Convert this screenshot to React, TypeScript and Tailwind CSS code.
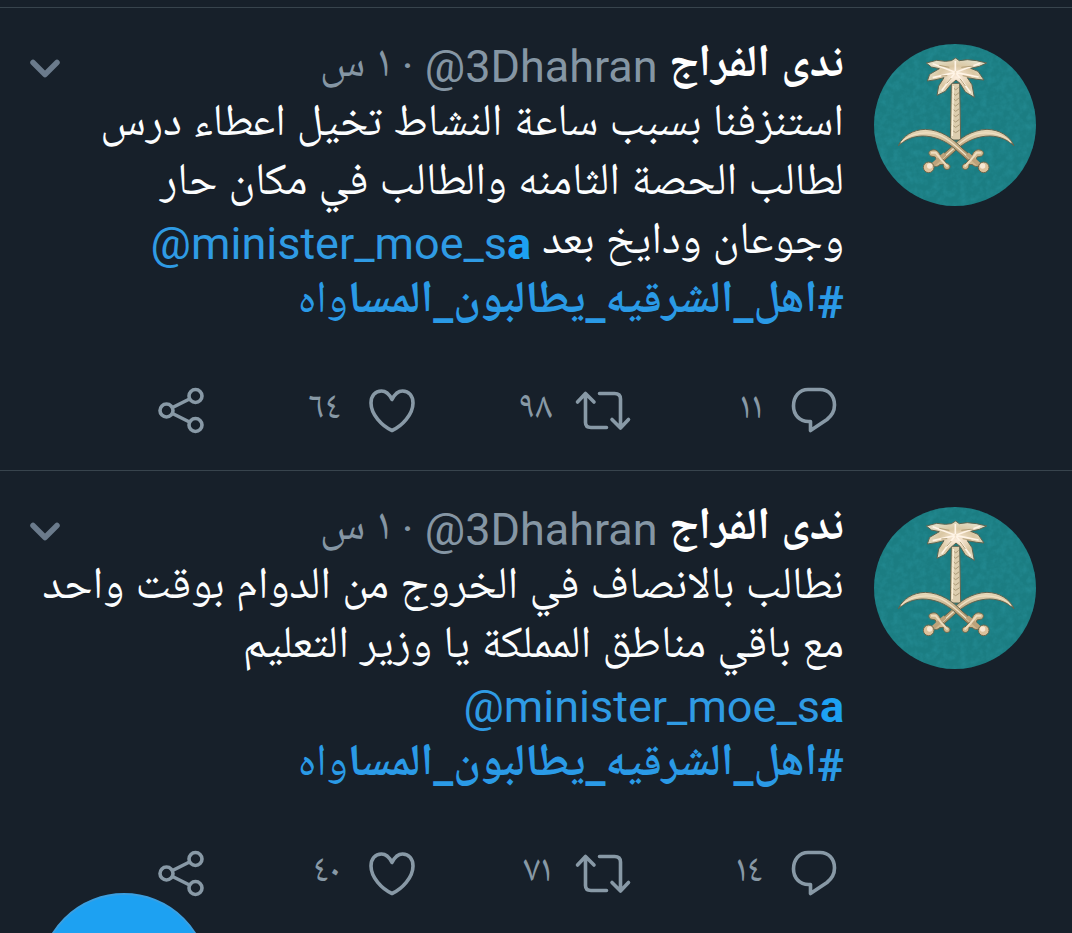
import type { ReactNode } from "react";

type Tweet = {
  id: number;
  lines: ReactNode[];
  replies: string;
  retweets: string;
  likes: string;
};

function Mention() {
  return (
    <a href="#mention" dir="ltr" className="text-[#2f9be4]">
      @minister_moe_s<b className="text-[#1da1f2]">a</b>
    </a>
  );
}

function Hashtag() {
  return (
    <a href="#hashtag" className="text-[#2a9ae6]">
      <b>#اهل_الشرقيه_يطالبون_المسا</b>واه
    </a>
  );
}

const tweets: Tweet[] = [
  {
    id: 1,
    lines: [
      "استنزفنا بسبب ساعة النشاط تخيل اعطاء درس",
      "لطالب الحصة الثامنه والطالب في مكان حار",
      <>
        وجوعان ودايخ بعد <Mention />
      </>,
      <Hashtag />,
    ],
    replies: "١١",
    retweets: "٩٨",
    likes: "٦٤",
  },
  {
    id: 2,
    lines: [
      "نطالب بالانصاف في الخروج من الدوام بوقت واحد",
      "مع باقي مناطق المملكة يا وزير التعليم",
      <Mention />,
      <Hashtag />,
    ],
    replies: "١٤",
    retweets: "٧١",
    likes: "٤٠",
  },
];

function Sword() {
  return (
    <g>
      <path
        d="M115 347C128 318 158 299 196 298C243 300 278 325 306 354L354 395L342 408L286 358C256 331 222 318 187 318C158 319 136 329 115 347Z"
        fill="url(#gold)"
        stroke="#5f6450"
        strokeWidth="3"
      />
      <path d="M124 337C150 309 205 300 246 319C276 333 300 360 340 396" fill="none" stroke="#efe0c4" strokeWidth="4" />
      <path
        d="M360 360C371 361 374 372 365 378L351 381L347 392L358 398C358 412 346 412 338 404L327 403C328 416 318 422 309 416C304 408 309 402 318 400L330 386L341 367C347 360 353 358 360 360Z"
        fill="#d0b88f"
        stroke="#6d674c"
        strokeWidth="3"
      />
      <path d="M322 372L362 408" stroke="#bda27a" strokeWidth="13" />
      <path d="M314 410L334 388L350 368L364 368" fill="none" stroke="#eddcbf" strokeWidth="6" />
      <circle cx="371" cy="412" r="16" fill="#dcc19b" stroke="#6d674c" strokeWidth="3" />
      <circle cx="368" cy="408" r="8" fill="#f7e8d4" />
    </g>
  );
}

function Avatar() {
  return (
    <svg viewBox="42 42 486 486" className="mt-[7px] size-[162px] shrink-0 rounded-full" role="img" aria-label="ندى الفراج">
      <defs>
        <linearGradient id="gold" x1="0" y1="0" x2="0" y2="1">
          <stop offset="0" stopColor="#e8dabb" />
          <stop offset="0.5" stopColor="#bda57c" />
          <stop offset="1" stopColor="#9c845e" />
        </linearGradient>
        <radialGradient id="leaf">
          <stop offset="0" stopColor="#fdeede" />
          <stop offset="0.6" stopColor="#dac7a3" />
          <stop offset="1" stopColor="#e2dcc4" />
        </radialGradient>
        <filter id="felt" x="0" y="0" width="1" height="1">
          <feTurbulence type="fractalNoise" baseFrequency="0.05" numOctaves="3" seed="4" />
          <feColorMatrix values="0 0 0 0 0.02  0 0 0 0 0.28  0 0 0 0 0.32  1.2 0 0 0 -0.45" />
        </filter>
      </defs>
      <rect x="42" y="42" width="486" height="486" fill="#1b7d82" />
      <rect x="42" y="42" width="486" height="486" filter="url(#felt)" />
      <path d="M274 160H299L302 330H271Z" fill="#dccdae" stroke="#5f6450" strokeWidth="3" />
      <path
        d="M279 172l8 8 9-8M278 188l9 8 10-8M278 204l9 8 10-8M277 220l10 8 10-8M277 236l10 8 11-8M276 252l11 8 11-8M276 268l11 8 11-8M275 284l12 8 12-8M275 300l12 8 12-8"
        fill="none"
        stroke="#ab9a78"
        strokeWidth="3"
      />
      <path d="M280 168L277 318" stroke="#fbf0d8" strokeWidth="4" />
      <path
        d="M287 84L298 92L322 89L350 92L380 99L358 109L332 115L354 124L372 150L350 148L322 143L336 164L343 202L316 186L300 160L288 150L272 164L256 184L231 196L236 168L252 143L228 149L202 153L209 133L238 116L214 111L199 99L230 91L256 94L274 92Z"
        fill="url(#leaf)"
        stroke="#5f6450"
        strokeWidth="3"
        strokeLinejoin="round"
      />
      <path
        d="M284 126L218 101M284 128L218 143M284 130L245 182M289 126L360 100M289 128L356 141M289 130L332 188M286 124V93"
        fill="none"
        stroke="#fff4e6"
        strokeWidth="5"
      />
      <path
        d="M268 112L238 106M262 137L244 138M274 144L260 160M304 112L340 108M308 137L334 142M300 146L316 168"
        fill="none"
        stroke="#b39f78"
        strokeWidth="3"
      />
      <g transform="matrix(-1 0 0 1 577 0)">
        <Sword />
      </g>
      <Sword />
    </svg>
  );
}

const icon = "h-[50px] w-[60px] shrink-0";

function ReplyIcon() {
  return (
    <svg viewBox="0 0 60 50" className={icon} fill="none" stroke="currentColor" strokeWidth="3.6" strokeLinejoin="round">
      <path d="M24 4.5H36C44.500 4.500 50.500 10.500 50.500 20C50.500 26.500 48 30.500 43 34.500L26.500 45.500V36.500H24.500C15.500 36.500 9.500 29.500 9.500 21C9.500 11.500 15.500 4.500 24 4.500Z" />
    </svg>
  );
}

function RetweetIcon() {
  return (
    <svg viewBox="0 0 60 50" className={icon} fill="none" stroke="currentColor" strokeWidth="3.6" strokeLinecap="round" strokeLinejoin="round">
      <path d="M4.500 17L12.500 8.500L21 17M12.500 9V37.500Q12.500 42.500 18 42.500H33.500M26.500 8.500H41.500Q47.500 8.500 47.500 14V42.500M39 34.500L47.500 43L55.500 34.500" />
    </svg>
  );
}

function HeartIcon() {
  return (
    <svg viewBox="0 0 60 50" className={icon} fill="none" stroke="currentColor" strokeWidth="3.6" strokeLinejoin="round">
      <path d="M30 14.500C27.500 9.500 24 6 19.500 6C13 6 9 11 9 18C9 29.500 20 41 30 45.500C40 41 51 29.500 51 18C51 11 47 6 40.500 6C36 6 32.500 9.500 30 14.500Z" />
    </svg>
  );
}

function ShareIcon() {
  return (
    <svg viewBox="0 0 60 50" className={icon} fill="none" stroke="currentColor" strokeWidth="3.6">
      <circle cx="15.500" cy="25.500" r="6.500" />
      <circle cx="44.500" cy="11" r="6.500" />
      <circle cx="44.500" cy="40" r="6.500" />
      <path d="M21.500 22.500L38.500 14M21.500 28.500L38.500 37" />
    </svg>
  );
}

function Action({ label, count, children }: { label: string; count?: string; children: ReactNode }) {
  return (
    <button type="button" aria-label={label} className="flex items-center gap-[21px]">
      {children}
      {count && <span className="text-[38px] leading-10">{count}</span>}
    </button>
  );
}

function TweetCard({ tweet }: { tweet: Tweet }) {
  return (
    <article className="flex items-start gap-[30px] border-t border-[#38444d] pt-[29px] pr-9">
      <Avatar />
      <div className="min-w-0 flex-1">
        <header className="flex h-[59px] items-center justify-between pl-[30px]">
          <div className="h-[59px] whitespace-nowrap text-[#8596a4]">
            <b className="text-white">ندى الفراج</b> <span dir="ltr">@3Dhahran</span> · ١ س
          </div>
          <button type="button" aria-label="المزيد" className="pt-1 text-[#6b7b8c]">
            <svg viewBox="0 0 30 20" className="h-5 w-[30px]" fill="none" stroke="currentColor" strokeWidth="5.500" strokeLinecap="round" strokeLinejoin="round">
              <path d="M3 3.500L15 15.500L27 3.500" />
            </svg>
          </button>
        </header>
        <div className="whitespace-nowrap text-[#fbfdfe]">
          {tweet.lines.map((line, i) => (
            <p key={i} className="h-[59px]">
              {line}
            </p>
          ))}
        </div>
        <footer className="grid grid-cols-4 pt-[53px] pb-[35px] text-[#8899a6]">
          <Action label="رد" count={tweet.replies}>
            <ReplyIcon />
          </Action>
          <Action label="إعادة تغريد" count={tweet.retweets}>
            <RetweetIcon />
          </Action>
          <Action label="إعجاب" count={tweet.likes}>
            <HeartIcon />
          </Action>
          <Action label="مشاركة">
            <ShareIcon />
          </Action>
        </footer>
      </div>
    </article>
  );
}

export default function App() {
  return (
    <main
      dir="rtl"
      lang="ar"
      className="relative min-h-screen overflow-hidden bg-[#17202a] pt-[7px] font-[Roboto,'Noto_Naskh_Arabic_UI','Noto_Naskh_Arabic','Noto_Sans_Arabic','DejaVu_Sans',sans-serif] text-[45px] leading-[59px]"
    >
      {tweets.map((tweet) => (
        <TweetCard key={tweet.id} tweet={tweet} />
      ))}
      <button
        type="button"
        aria-label="تغريدة جديدة"
        className="absolute -bottom-[130px] left-[39px] size-[170px] rounded-full border-2 border-[#3b9fe0] bg-[#1da1f2]"
      />
    </main>
  );
}
